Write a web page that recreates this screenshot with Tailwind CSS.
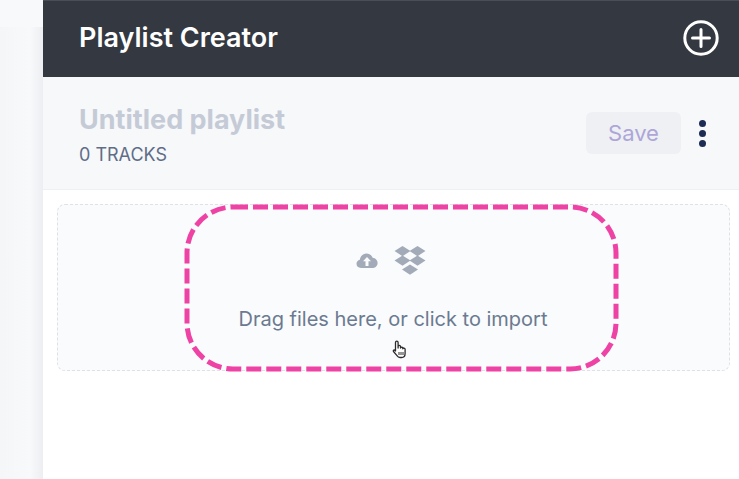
<!DOCTYPE html>
<html lang="en">
<head>
  <meta charset="UTF-8">
  <title>Playlist Creator</title>
  <script src="https://cdn.jsdelivr.net/npm/@tailwindcss/browser@4"></script>
</head>
<body class="bg-[#f8f9fb] h-[479px] w-[739px] overflow-hidden font-['Inter',sans-serif]">
  <div class="flex h-full">
    <!-- left gutter -->
    <div class="w-[43px] shrink-0 pt-[27px]">
      <div class="h-full w-full bg-gradient-to-r from-[#f5f6f8] via-[#f8f9fb] via-70% to-[#eceef1]"></div>
    </div>

    <!-- panel -->
    <div class="flex-1 bg-white flex flex-col">
      <div class="h-[77px] bg-[#343840] flex items-center justify-between pl-[36px] pr-[20px] pb-[3px] border-t border-[#4a4e55]">
        <h1 class="text-white text-[27px] font-semibold mt-[2px]">Playlist Creator</h1>
        <svg class="w-[36px] h-[36px]" viewBox="0 0 36 36" fill="none" stroke="white">
          <circle cx="18" cy="18" r="16.2" stroke-width="3"/>
          <path d="M18 9.500v17M9.500 18h17" stroke-width="3" stroke-linecap="round"/>
        </svg>
      </div>

      <div class="h-[113px] bg-[#f7f8fa] border-b border-[#eef0f3] flex items-center justify-between pl-[36px] pr-[33px]">
        <div class="pt-[5px]">
          <div class="text-[#c5cbd6] text-[27px] font-bold leading-[32px]">Untitled playlist</div>
          <div class="text-[#5f6d87] text-[18px] leading-[24px] mt-[7px]">0 TRACKS</div>
        </div>
        <div class="flex items-center gap-[18px]">
          <button class="w-[95px] h-[42px] rounded-[6px] bg-[#eef0f3] text-[#ada6d8] text-[22px]">Save</button>
          <div class="flex flex-col gap-[3px]">
            <span class="block w-[7px] h-[7px] rounded-full bg-[#1c2c55]"></span>
            <span class="block w-[7px] h-[7px] rounded-full bg-[#1c2c55]"></span>
            <span class="block w-[7px] h-[7px] rounded-full bg-[#1c2c55]"></span>
          </div>
        </div>
      </div>

      <div class="relative mt-[14px] ml-[14px] mr-[9px] h-[167px] rounded-[8px] border border-dashed border-[#dfe1e6] bg-[#fafbfd] flex flex-col items-center">
        <div class="flex items-start gap-[16px] mt-[41px] h-[29px] -ml-[6px]">
          <svg class="w-[22px] h-[18px] mt-[5px]" viewBox="0 0 22 17" fill="#a3abb9">
            <path d="M5 16.500C2.200 16.500 0.500 14.600 0.500 12.300c0-2 1.400-3.600 3.300-4C4.200 4.800 6.900 2 10.500 2c2.900 0 5.200 1.700 6.100 4.300 2.800.2 5 2.400 5 5.200 0 2.800-2.200 5-5 5z"/>
            <path d="M11 5.500l4 4.300h-2.500v4.700h-3V9.800H7z" fill="#fafbfd"/>
          </svg>
          <svg class="w-[32px] h-[29px]" viewBox="0 0 32 29" fill="#a3abb9">
            <path d="M8.500 0L16.500 5.100 8.500 10.200 0.500 5.100z"/>
            <path d="M23.500 0L31.500 5.100 23.500 10.200 15.500 5.100z"/>
            <path d="M8.500 9.500L16.500 14.600 8.500 19.700 0.500 14.600z"/>
            <path d="M23.500 9.500L31.500 14.600 23.500 19.700 15.500 14.600z"/>
            <path d="M16 18.500L24 23.600 16 28.700 8 23.600z"/>
          </svg>
        </div>
        <p class="text-[#6b7a90] text-[20px] leading-[28px] mt-[30px] -ml-[1px]">Drag files here, or click to import</p>

        <!-- highlight drawn over the drop zone -->
        <svg class="absolute left-[126px] top-[-1px] w-[436px] h-[168px]" viewBox="0 0 436 168" fill="none">
          <rect x="3" y="3" width="429" height="162" rx="46" stroke="#ee42a4" stroke-width="5" stroke-dasharray="15 5"/>
        </svg>

        <!-- hand cursor -->
        <svg class="absolute left-[334px] top-[135px] w-[16px] h-[19px]" viewBox="0 0 16 19" fill="white" stroke="#2b2b2b" stroke-width="1.300" stroke-linejoin="round">
          <path d="M3.500 11V2.500a1.300 1.300 0 0 1 2.600 0V8l0-1.500a1.200 1.200 0 0 1 2.400 0V8a1.200 1.200 0 0 1 2.300 0v.8a1.200 1.200 0 0 1 2.300.2v4.500c0 2.500-1.500 4-3.500 4H8c-1.500 0-2.300-.7-3-1.800L1.500 11.500c-.8-1.200.8-2.300 2-.5z"/>
          <path d="M7 12v3M9 12v3M11 12v3" fill="none" stroke-width="1"/>
        </svg>
      </div>
    </div>
  </div>
</body>
</html>
